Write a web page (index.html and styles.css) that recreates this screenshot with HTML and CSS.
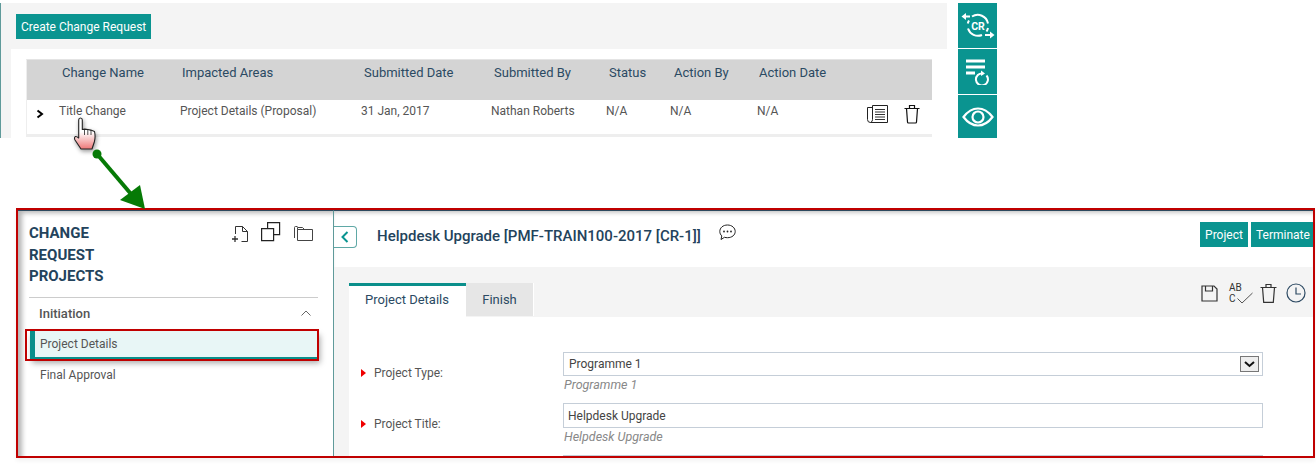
FILE: index.html
```html
<!DOCTYPE html>
<html lang="en">
<head>
    <meta charset="UTF-8">
    <meta name="viewport" content="width=device-width, initial-scale=1.0">
    <title>Change Request Projects</title>
    <link rel="stylesheet" href="styles.css">
</head>
<body>
    <section class="list-shot">
        <div class="list-panel">
            <div class="list-top">
                <button class="btn">Create Change Request</button>
            </div>
            <div class="list-card">
                <div class="cr-table">
                    <div class="cr-row cr-head">
                        <span></span>
                        <span>Change Name</span>
                        <span>Impacted Areas</span>
                        <span>Submitted Date</span>
                        <span>Submitted By</span>
                        <span>Status</span>
                        <span>Action By</span>
                        <span>Action Date</span>
                    </div>
                    <div class="cr-row cr-body">
                        <svg class="row-toggle" width="8" height="10" viewBox="0 0 8 10"><path d="M1.5 1.5 6 5 1.5 8.5" fill="none" stroke="#000" stroke-width="2"/></svg>
                        <span>Title Change</span>
                        <span>Project Details (Proposal)</span>
                        <span>31 Jan, 2017</span>
                        <span>Nathan Roberts</span>
                        <span>N/A</span>
                        <span>N/A</span>
                        <span>N/A</span>
                        <div class="row-icons">
                            <svg width="21" height="20" viewBox="0 0 21 20" fill="none" stroke="#222"><path d="M5.5 1.5h15v17h-17a3 3 0 0 1-3-3v-12h5"/><path d="M5.5 1.5v14a3 3 0 0 1-2 3"/><path d="M8 5.5h10M8 8h10M8 10.5h10M8 13h10M8 15.5h10" stroke="#333"/></svg>
                            <svg width="16" height="20" viewBox="0 0 16 20" fill="none" stroke="#111" stroke-width="1.2"><path d="M.5 4.5h15M5.5 4.5v-3h5v3M2.5 4.5l1 13.5a1 1 0 0 0 1 1h7a1 1 0 0 0 1-1l1-13.5"/></svg>
                        </div>
                    </div>
                </div>
            </div>
        </div>
        <div class="side-tools">
            <button class="tool">
                <svg width="34" height="30" viewBox="0 0 34 30" fill="none" stroke="#fff" stroke-width="2"><path d="M11 5.500A10.500 10.500 0 0 1 27 12.500M27 17a10.500 10.500 0 0 1-1.500 3.500M21 24A10.500 10.500 0 0 1 7 17.500M6.800 12.500A10.500 10.500 0 0 1 8 9.500"/><path d="M4 5.500h5M24 24h6"/><path d="M5 2 0.500 5.500 5 9z" fill="#fff" stroke="none"/><path d="M29 20.500 33.500 24 29 27.500z" fill="#fff" stroke="none"/><text x="17" y="18.500" text-anchor="middle" class="tool-text">CR</text></svg>
            </button>
            <button class="tool">
                <svg width="24" height="26" viewBox="0 0 24 26" fill="none" stroke="#fff"><path d="M0 2h19M0 8h19M0 14h9" stroke-width="3"/><path d="M20.500 16.500a6 6 0 1 1-3.500-2" stroke-width="2"/><path d="M15 11.500l4 3-4 2.500z" fill="#fff" stroke="none"/></svg>
            </button>
            <button class="tool">
                <svg width="32" height="20" viewBox="0 0 32 20" fill="none" stroke="#fff" stroke-width="2.200"><path d="M1.500 10C6 4 10.500 1.500 16 1.500S26 4 30.500 10C26 16 21.500 18.500 16 18.500S6 16 1.500 10z"/><circle cx="16" cy="10" r="5.500"/></svg>
            </button>
        </div>
    </section>

    <section class="detail-shot">
        <aside class="sidebar">
            <div class="side-head">
                <h2>CHANGE<br>REQUEST<br>PROJECTS</h2>
                <div class="side-icons">
                    <svg width="18" height="18" viewBox="0 0 18 18" fill="none" stroke="#333"><path d="M3.500 9V1.500h7l5 5v10h-6M10.500 1.500v5h5"/><path d="M0 14h6M3 11v6" stroke-width="1.300"/></svg>
                    <svg width="20" height="20" viewBox="0 0 20 20" fill="none" stroke="#222" stroke-width="1.200"><path d="M.6 6.600h12v12H.6z"/><path d="M6.600 6V.6h12v12H13"/></svg>
                    <svg width="19" height="15" viewBox="0 0 19 15" fill="none" stroke="#444"><path d="M3.500 14.500h15v-11h-15zM3.500 3.500V1.500h5l2 2M.5 12V1.500a1 1 0 0 1 1-1h2"/></svg>
                </div>
            </div>
            <div class="side-group">
                <span>Initiation</span>
                <svg width="10" height="6" viewBox="0 0 10 6"><path d="M.5 5.500 5 1l4.500 4.500" fill="none" stroke="#666"/></svg>
            </div>
            <a class="side-item active">Project Details</a>
            <a class="side-item">Final Approval</a>
        </aside>
        <div class="content">
            <div class="content-top">
                <button class="back">
                    <svg width="8" height="12" viewBox="0 0 8 12"><path d="M6.500 1 1.500 6l5 5" fill="none" stroke="#0a9490" stroke-width="2"/></svg>
                </button>
                <h1>Helpdesk Upgrade [PMF-TRAIN100-2017 [CR-1]]</h1>
                <svg class="comment" width="17" height="17" viewBox="0 0 17 17" fill="none" stroke="#222"><path d="M8.500 1C4 1 .8 3.800.8 7.500c0 1.800.8 3.300 2 4.400L2 15.500l3.500-2.200c1 .3 2 .4 3 .4 4.500 0 7.700-2.700 7.700-6.200S13 1 8.500 1z"/><circle cx="5" cy="7.500" r=".9" fill="#222" stroke="none"/><circle cx="8.500" cy="7.500" r=".9" fill="#222" stroke="none"/><circle cx="12" cy="7.500" r=".9" fill="#222" stroke="none"/></svg>
                <div class="top-actions">
                    <button class="btn">Project</button>
                    <button class="btn">Terminate</button>
                </div>
            </div>
            <div class="workspace">
                <div class="tabs-bar">
                    <div class="tab active">Project Details</div>
                    <div class="tab">Finish</div>
                    <div class="tab-tools">
                        <svg width="17" height="17" viewBox="0 0 17 17" fill="none" stroke="#333" stroke-width="1.200"><path d="M1 1h12l3 3v12H1zM4.500 1v5h7V1"/></svg>
                        <div class="spell">
                            <span>AB<br>C</span>
                            <svg width="16" height="12" viewBox="0 0 16 12"><path d="M.5 6.500 5 11 15.500 1" fill="none" stroke="#555"/></svg>
                        </div>
                        <svg class="tool-trash" width="17" height="20" viewBox="0 0 17 20" fill="none" stroke="#333" stroke-width="1.200"><path d="M.5 4.500h16M6 4.500v-3h5v3M2.500 4.500l1.200 14.800h9.600l1.200-14.800"/></svg>
                        <svg class="tool-clock" width="20" height="20" viewBox="0 0 20 20" fill="none" stroke="#2d4a63" stroke-width="1.200"><circle cx="10" cy="10" r="9"/><path d="M10 4.500V11h5"/></svg>
                    </div>
                </div>
                <form class="form-body">
                    <div class="form-row">
                        <label class="req">Project Type:</label>
                        <div class="field">
                            <div class="input select-box">
                                <span>Programme 1</span>
                                <span class="select-arrow"><svg width="11" height="7" viewBox="0 0 11 7"><path d="M1 1l4.500 4L10 1" fill="none" stroke="#111" stroke-width="2"/></svg></span>
                            </div>
                            <div class="hint">Programme 1</div>
                        </div>
                    </div>
                    <div class="form-row">
                        <label class="req">Project Title:</label>
                        <div class="field">
                            <div class="input">Helpdesk Upgrade</div>
                            <div class="hint">Helpdesk Upgrade</div>
                        </div>
                    </div>
                    <div class="form-row">
                        <span></span>
                        <div class="field"><div class="input"></div></div>
                    </div>
                </form>
            </div>
        </div>
    </section>

    <div class="highlight"></div>

    <svg class="pointer" width="26" height="36" viewBox="0 0 26 36">
        <defs>
            <linearGradient id="handFill" x1="0" y1="0" x2="0" y2="1">
                <stop offset="0.45" stop-color="#fff"/>
                <stop offset="1" stop-color="#ee7777"/>
            </linearGradient>
        </defs>
        <path d="M7.500 1c1.200 0 1.800.8 1.800 2v9.500l2.500-.4 3 .4 3 .6 3.700 1.400c.8 3.500.8 7-.2 10.500l-2.300 7H8L2 23c-.8-1.500-.6-3 .5-3.500.9-.4 2 .5 3.200 1.500V3c0-1.200.6-2 1.800-2z" fill="url(#handFill)" stroke="#222" stroke-width="1.100" stroke-linejoin="round"/>
        <path d="M11.500 12.500V18M14.800 12.500V18M18 13V18" fill="none" stroke="#222" stroke-width=".8"/>
    </svg>

    <svg class="link-arrow" width="70" height="70" viewBox="0 0 70 70">
        <circle cx="5" cy="5" r="4.500" fill="#067a06"/>
        <path d="M5 5 39 45" stroke="#067a06" stroke-width="4"/>
        <path d="M28 51 48 36 53 60z" fill="#067a06"/>
    </svg>
</body>
</html>
```

FILE: styles.css
```css
body {
    font-family: Roboto, "Liberation Sans", sans-serif;
    margin: 0;
    padding: 0;
    background-color: white;
    position: relative;
    height: 475px;
    overflow: hidden;
}

button {
    font-family: inherit;
    border: none;
    padding: 0;
    cursor: pointer;
}

.btn {
    background-color: #0a9490;
    color: white;
    font-size: 12px;
    height: 25px;
    padding: 0 5px;
}

/* top picture: change request list */
.list-shot {
    display: flex;
    width: 997px;
    height: 135px;
    margin-top: 3px;
    border-left: 1px solid #5f9a9a;
    box-sizing: border-box;
    position: absolute;
    top: 0;
    left: 0;
}

.list-panel {
    width: 946px;
    background-color: #f4f4f4;
    display: flex;
    flex-direction: column;
}

.list-top {
    height: 46px;
    padding: 11px 0 0 15px;
    box-sizing: border-box;
}

.list-card {
    flex: 1;
    margin-left: 10px;
    background-color: white;
    padding: 10px 15px 0;
}

.cr-table {
    border-top: 1px solid #e4e4e4;
    border-left: 1px solid #eee;
    border-bottom: 3px solid #eee;
}

.cr-row {
    display: grid;
    grid-template-columns: 32px 121px 181px 130px 115px 64px 87px 1fr;
}

.cr-head {
    height: 40px;
    background-color: #d4d4d4;
    color: #2b4a63;
    font-size: 13px;
    line-height: 26px;
}

.cr-head span {
    padding-left: 3px;
}

.cr-head span:nth-child(3),
.cr-head span:nth-child(8) {
    padding-left: 2px;
}

.cr-head span:nth-child(7) {
    padding-left: 4px;
}

.cr-body {
    height: 34px;
    font-size: 12px;
    line-height: 23px;
    color: #555;
    background-color: white;
    position: relative;
}

.row-toggle {
    margin: 9px 0 0 9px;
}

.row-icons {
    display: flex;
    align-items: center;
    gap: 16px;
    position: absolute;
    top: 4px;
    left: 840px;
}

.side-tools {
    margin-left: 11px;
    width: 39px;
    display: flex;
    flex-direction: column;
    gap: 1px;
}

.tool {
    background-color: #0a9490;
    height: 45px;
    display: flex;
    align-items: center;
    justify-content: center;
}

.tool:last-child {
    height: 43px;
}

.tool-text {
    font-size: 10.500px;
    font-weight: 700;
    fill: white;
    stroke: none;
}

/* bottom picture: project details */
.detail-shot {
    position: absolute;
    top: 208px;
    left: 16px;
    width: 1299px;
    height: 250px;
    box-sizing: border-box;
    border: 2px solid #c00000;
    display: flex;
    overflow: hidden;
    box-shadow: 0 3px 4px rgba(0, 0, 0, 0.05);
}

.sidebar {
    width: 316px;
    flex-shrink: 0;
    box-sizing: border-box;
    border-top: 1px solid #2d4a5f;
    border-right: 1px solid #5f9a9a;
    padding: 12px 15px 0 11px;
    box-shadow: inset 7px 5px 5px -3px #b5b5b5;
}

.side-head {
    display: flex;
    justify-content: space-between;
    border-bottom: 1px solid #ccc;
    height: 74px;
}

.side-head h2 {
    margin: 0;
    font-size: 15px;
    line-height: 21.500px;
    font-weight: 700;
    color: #23435c;
}

.side-icons {
    display: flex;
    gap: 13px;
    align-items: flex-start;
    margin-top: -1px;
    padding-right: 5px;
}

.side-icons svg:nth-child(1) {
    margin: 3px -2px 0 0;
}

.side-icons svg:nth-child(3) {
    margin-top: 4px;
}

.side-group {
    display: flex;
    justify-content: space-between;
    align-items: center;
    padding: 0 7px 0 10px;
    height: 30px;
    margin-bottom: 3px;
    font-size: 13px;
    font-weight: 500;
    color: #555;
}

.side-item {
    display: block;
    margin-left: 1px;
    padding-left: 10px;
    height: 31px;
    line-height: 31px;
    font-size: 12px;
    color: #555;
}

.side-item.active {
    height: 28px;
    line-height: 26px;
    box-sizing: border-box;
    padding-left: 5px;
    border-left: 5px solid #0a8f8b;
    border-bottom: 2px solid #0a8f8b;
    background-color: #e8f6f6;
    box-shadow: 2px 4px 6px rgba(0, 0, 0, 0.35);
    margin-bottom: 1px;
}

.content {
    flex: 1;
    min-width: 0;
    display: flex;
    flex-direction: column;
}

.content-top {
    height: 57px;
    flex-shrink: 0;
    box-sizing: border-box;
    border-top: 1px solid #2d4a5f;
    box-shadow: inset 0 4px 5px -3px #b5b5b5;
    display: flex;
    align-items: flex-start;
    padding-top: 15px;
}

.back {
    width: 23px;
    height: 22px;
    background-color: white;
    border: 1px solid #5fa8a6;
    border-left: none;
    border-radius: 0 4px 4px 0;
    display: flex;
    align-items: center;
    justify-content: center;
}

.content-top h1 {
    margin: 0 0 0 20px;
    font-size: 15px;
    line-height: 20px;
    font-weight: 500;
    color: #23435c;
}

.comment {
    margin: -2px 0 0 18px;
}

.top-actions {
    margin-left: auto;
    display: flex;
    gap: 3px;
    margin-top: -4px;
}

.top-actions .btn {
    box-sizing: border-box;
    width: 48px;
}

.top-actions .btn:last-child {
    width: 62px;
}

.workspace {
    flex: 1;
    min-height: 0;
    background-color: #f4f4f4;
    padding: 16px 0 0 15px;
    display: flex;
    flex-direction: column;
}

.tabs-bar {
    display: flex;
    height: 34px;
    flex-shrink: 0;
}

.tab {
    font-size: 13px;
    color: #2b4a63;
    text-align: center;
    width: 68px;
    height: 33px;
    line-height: 33px;
    box-sizing: border-box;
    background-color: #e6e6e6;
    border-right: 1px solid white;
}

.tab.active {
    width: 117px;
    height: 34px;
    line-height: 27px;
    padding-right: 1px;
    background-color: white;
    border-top: 3px solid #0a8f8b;
    border-right: none;
}

.tab-tools {
    margin-left: auto;
    display: flex;
    align-items: center;
    gap: 12px;
    padding-right: 7px;
    margin-top: -14px;
}

.tool-trash {
    margin-left: -6px;
}

.tool-clock {
    margin-left: -3px;
}

.spell {
    display: flex;
    align-items: flex-end;
    margin-left: -1px;
    font-size: 10px;
    line-height: 11px;
    color: #333;
    width: 25px;
}

.spell svg {
    margin-left: -5px;
    flex-shrink: 0;
}

.form-body {
    flex: 1;
    min-height: 0;
    background-color: white;
    padding-top: 35px;
    overflow: hidden;
}

.form-row {
    display: grid;
    grid-template-columns: 214px 700px;
    height: 51px;
}

.form-row:last-child {
    margin-top: 1px;
}

.req {
    font-size: 12px;
    color: #555;
    padding: 14px 0 0 25px;
    position: relative;
}

.req::before {
    content: "";
    position: absolute;
    left: 12px;
    top: 17px;
    border-left: 5px solid #f00000;
    border-top: 4px solid transparent;
    border-bottom: 4px solid transparent;
}

.input {
    box-sizing: border-box;
    height: 25px;
    border: 1px solid #c5ced8;
    font-size: 12px;
    line-height: 25px;
    color: #444;
    padding-left: 4px;
}

.select-box {
    height: 24px;
    display: flex;
    justify-content: space-between;
    align-items: center;
    padding-left: 5px;
    padding-right: 3px;
}

.select-arrow {
    width: 19px;
    height: 16px;
    box-sizing: border-box;
    border: 1px solid #777;
    background-color: #eee;
    display: flex;
    align-items: center;
    justify-content: center;
}

.hint {
    font-size: 12.500px;
    font-style: italic;
    color: #888;
    line-height: 18px;
    padding-left: 1px;
}

.highlight {
    position: absolute;
    left: 25px;
    top: 329px;
    width: 294px;
    height: 32px;
    box-sizing: border-box;
    border: 2px solid #c00000;
}

.pointer {
    position: absolute;
    left: 73px;
    top: 117px;
    filter: drop-shadow(1px 2px 2px rgba(0, 0, 0, 0.4));
}

.link-arrow {
    position: absolute;
    left: 92px;
    top: 149px;
}
```
